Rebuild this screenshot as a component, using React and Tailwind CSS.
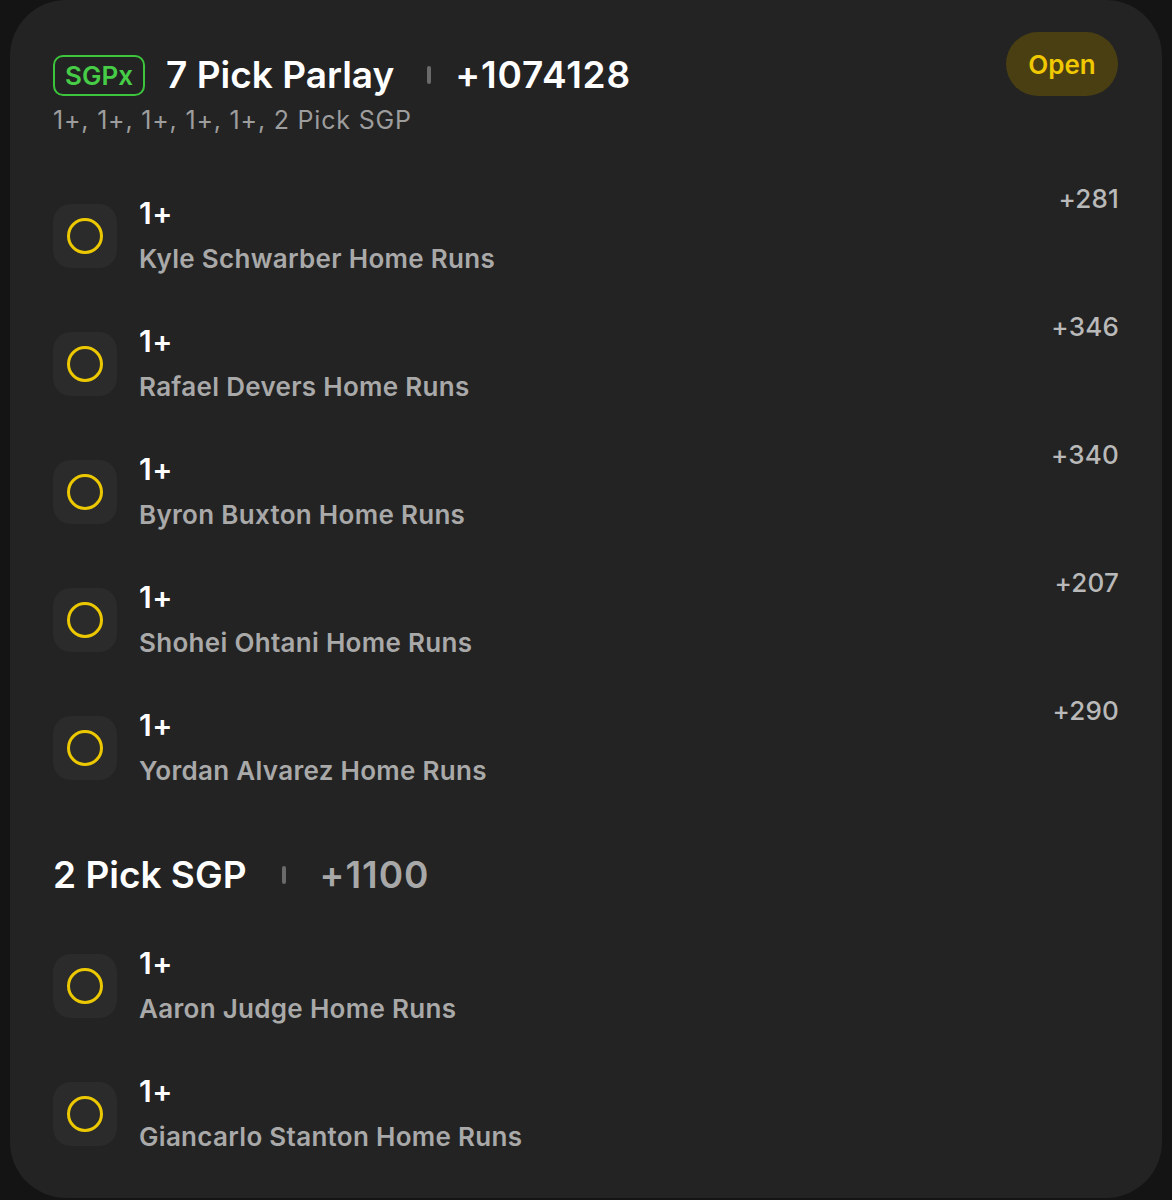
import React from 'react';

const firstLegs = [
  { name: 'Kyle Schwarber Home Runs', odds: '+281' },
  { name: 'Rafael Devers Home Runs', odds: '+346' },
  { name: 'Byron Buxton Home Runs', odds: '+340' },
  { name: 'Shohei Ohtani Home Runs', odds: '+207' },
  { name: 'Yordan Alvarez Home Runs', odds: '+290' },
];

const sgpLegs = [
  { name: 'Aaron Judge Home Runs' },
  { name: 'Giancarlo Stanton Home Runs' },
];

function Leg({ name, odds }) {
  return (
    <div className="flex h-[128px] items-center">
      <div className="flex h-[64px] w-[64px] shrink-0 items-center justify-center rounded-[18px] bg-[#2b2b2b]">
        <div className="h-[36px] w-[36px] rounded-full border-[3px] border-[#ecc800]" />
      </div>
      <div className="ml-[22px] flex flex-1 flex-col">
        <div className="text-[30px] font-semibold leading-[36px] tracking-[0.5px] text-white">1+</div>
        <div className="mt-[10px] text-[26px] font-semibold leading-[36px] tracking-[0.3px] text-[#a9a9a9]">{name}</div>
      </div>
      {odds && (
        <div className="mt-[12px] self-start text-[26px] font-medium leading-[30px] tracking-[0.2px] text-[#b9b9b9]">{odds}</div>
      )}
    </div>
  );
}

function Divider() {
  return <div className="h-[18px] w-[4px] rounded-full bg-[#6a6a6a]" />;
}

export default function App() {
  return (
    <div className="h-[1200px] w-full bg-[#141414] px-[10px]" style={{ fontFamily: 'Inter, "Noto Sans", sans-serif' }}>
      <div className="h-[1198px] rounded-[56px] bg-[#232323] px-[43px] pt-[32px]">
        {/* Header */}
        <div className="flex items-start justify-between">
          <div className="mt-[21px] flex flex-col">
            <div className="flex h-[44px] items-center">
              <div className="flex h-[41px] w-[92px] items-center justify-center rounded-[10px] border-2 border-[#3cc43c] text-[26px] font-semibold text-[#46cc46]">
                SGPx
              </div>
              <div className="ml-[21px] text-[37px] font-semibold leading-[44px] text-white">7 Pick Parlay</div>
              <div className="ml-[33px]"><Divider /></div>
              <div className="ml-[24px] text-[37px] font-semibold leading-[44px] tracking-[0.8px] text-white">+1074128</div>
            </div>
            <div className="mt-[7px] text-[25px] leading-[32px] tracking-[0.8px] text-[#9d9d9d]">1+, 1+, 1+, 1+, 1+, 2 Pick SGP</div>
          </div>
          <div className="mr-[1px] flex h-[64px] w-[112px] items-center justify-center rounded-full bg-[#4a3f12] text-[26px] font-semibold text-[#f0c800]">
            Open
          </div>
        </div>

        {/* First legs */}
        <div className="mt-[36px] flex flex-col">
          {firstLegs.map((leg) => (
            <Leg key={leg.name} {...leg} />
          ))}
        </div>

        {/* 2 Pick SGP */}
        <div className="mt-[41px] flex h-[44px] items-center">
          <div className="text-[37px] font-semibold leading-[44px] text-white">2 Pick SGP</div>
          <div className="ml-[35px]"><Divider /></div>
          <div className="ml-[34px] text-[37px] font-semibold leading-[44px] tracking-[1px] text-[#a8a8a8]">+1100</div>
        </div>
        <div className="mt-[25px] flex flex-col">
          {sgpLegs.map((leg) => (
            <Leg key={leg.name} {...leg} />
          ))}
        </div>
      </div>
    </div>
  );
}
